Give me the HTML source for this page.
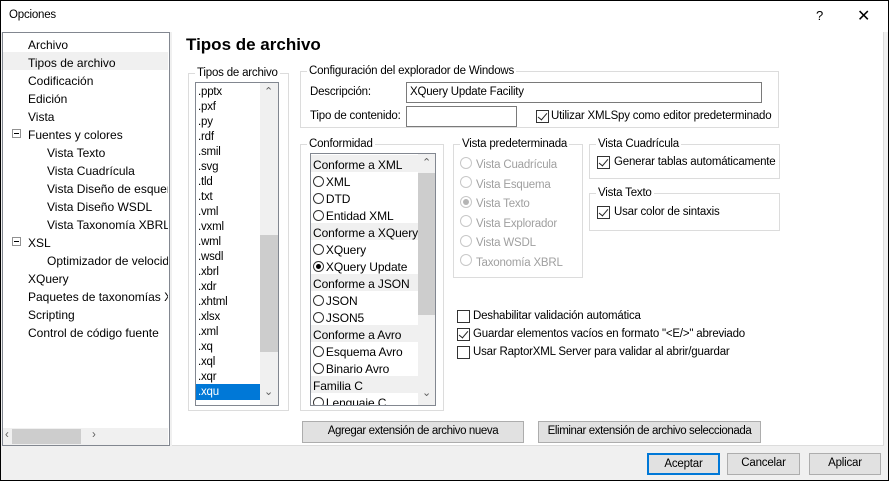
<!DOCTYPE html>
<html><head><meta charset="utf-8"><style>
*{margin:0;padding:0;box-sizing:border-box}
body{width:889px;height:481px;overflow:hidden;background:#f0f0f0;font-family:"Liberation Sans",sans-serif;font-size:11.5px;letter-spacing:-0.2px;color:#000;position:relative}
.a{position:absolute;white-space:nowrap}
.win{position:absolute;left:0;top:0;width:889px;height:481px;border:1px solid #000}
.gb{position:absolute;border:1px solid #dcdcdc}
.lg{position:absolute;top:-8px;left:6px;background:#fff;padding:0 2px;line-height:14px}
.inp{position:absolute;border:1px solid #7a7a7a;background:#fff}
.cb{position:absolute;width:13px;height:13px;border:1px solid #333;background:#fff}
.cb.c::after{content:"";position:absolute;left:3px;top:0px;width:4px;height:8px;border:solid #222;border-width:0 1.3px 1.3px 0;transform:rotate(40deg)}
.rd{position:absolute;width:12px;height:12px;border:1px solid #333;border-radius:50%;background:#fff}
.rd.g{border-color:#c8c8c8}
.btn{position:absolute;border:1px solid #adadad;background:#e1e1e1;text-align:center;line-height:19px;white-space:nowrap}
.sb{position:absolute;background:#f0f0f0}
.t{font-size:12px;letter-spacing:0}
</style></head><body>
<div class="win"></div>
<div class="a" style="width:887px;height:31px;background:#fff;left:1px;top:1px"></div>
<div class="a" style="left:9px;top:9px">Opciones</div>
<div class="a" style="left:816px;top:8px;font-size:13px">?</div>
<div class="a" style="left:857px;top:6px;font-size:16px">✕</div>

<!-- tree -->
<div class="a" style="left:2px;top:32px;width:168px;height:414px;background:#fff;border:1px solid #828790"></div>
<div class="a" style="left:3px;top:52px;width:165px;height:18px;background:#f0f0f0"></div>
<div class="a t" style="left:28px;top:36px;line-height:18px">Archivo<br>Tipos de archivo<br>Codificación<br>Edición<br>Vista<br>Fuentes y colores</div>
<div class="a t" style="left:47px;top:144px;line-height:18px;width:121px;overflow:hidden">Vista Texto<br>Vista Cuadrícula<br>Vista Diseño de esquema<br>Vista Diseño WSDL<br>Vista Taxonomía XBRL</div>
<div class="a t" style="left:28px;top:234px;line-height:18px">XSL</div>
<div class="a t" style="left:47px;top:252px;line-height:18px;width:121px;overflow:hidden">Optimizador de velocidad</div>
<div class="a t" style="left:28px;top:270px;line-height:18px;width:140px;overflow:hidden">XQuery<br>Paquetes de taxonomías XBRL<br>Scripting<br>Control de código fuente</div>
<div class="a" style="left:12px;top:129px;width:9px;height:9px;border:1px solid #919191;background:#fff"><div style="position:absolute;left:1px;top:3px;width:5px;height:1px;background:#000"></div></div>
<div class="a" style="left:12px;top:237px;width:9px;height:9px;border:1px solid #919191;background:#fff"><div style="position:absolute;left:1px;top:3px;width:5px;height:1px;background:#000"></div></div>
<div class="sb" style="left:3px;top:428px;width:165px;height:17px"></div>
<div class="a" style="left:12px;top:429px;width:69px;height:15px;background:#cdcdcd"></div>
<div class="a" style="left:5px;top:429px;color:#606060">‹</div>
<div class="a" style="left:92px;top:429px;color:#606060">›</div>

<!-- right panel -->
<div class="a" style="left:172px;top:32px;width:712px;height:414px;background:#fff;border-right:1px solid #dcdcdc;border-bottom:1px solid #dcdcdc"></div>
<div class="a" style="left:186px;top:35px;font-size:17px;font-weight:bold;letter-spacing:0">Tipos de archivo</div>

<div class="gb" style="left:188px;top:73px;width:101px;height:338px"><span class="lg">Tipos de archivo</span></div>
<div class="a" style="left:195px;top:82px;width:84px;height:324px;border:1px solid #828790;background:#fff;overflow:hidden">
<div class="a" style="left:0;top:301px;width:64px;height:16px;background:#0078d7"></div>
<div class="a" style="left:2px;top:2px;line-height:15px">.pptx<br>.pxf<br>.py<br>.rdf<br>.smil<br>.svg<br>.tld<br>.txt<br>.vml<br>.vxml<br>.wml<br>.wsdl<br>.xbrl<br>.xdr<br>.xhtml<br>.xlsx<br>.xml<br>.xq<br>.xql<br>.xqr<br><span style="color:#fff">.xqu</span></div>
<div class="sb" style="left:64px;top:0;width:18px;height:322px"></div>
<div class="a" style="left:64px;top:152px;width:18px;height:117px;background:#cdcdcd"></div>
<div class="a" style="left:68px;top:2px;color:#606060;font-size:11px">⌃</div>
<div class="a" style="left:68px;top:302px;color:#606060;font-size:11px">⌄</div>
</div>

<div class="gb" style="left:300px;top:71px;width:479px;height:57px"><span class="lg">Configuración del explorador de Windows</span></div>
<div class="a" style="left:310px;top:86px">Descripción:</div>
<div class="inp" style="left:406px;top:82px;width:356px;height:21px"><span class="a" style="left:3px;top:3px">XQuery Update Facility</span></div>
<div class="a" style="left:310px;top:110px">Tipo de contenido:</div>
<div class="inp" style="left:406px;top:106px;width:111px;height:21px"></div>
<div class="cb c" style="left:536px;top:110px"></div>
<div class="a" style="left:551px;top:110px">Utilizar XMLSpy como editor predeterminado</div>

<div class="gb" style="left:300px;top:144px;width:144px;height:267px"><span class="lg">Conformidad</span></div>
<div class="a" style="left:310px;top:153px;width:126px;height:253px;border:1px solid #828790;background:#fff;overflow:hidden">
<div class="a" style="left:0;top:1px;width:107px;height:17px;background:#f0f0f0"></div>
<div class="a" style="left:0;top:69px;width:107px;height:17px;background:#f0f0f0"></div>
<div class="a" style="left:0;top:120px;width:107px;height:17px;background:#f0f0f0"></div>
<div class="a" style="left:0;top:171px;width:107px;height:17px;background:#f0f0f0"></div>
<div class="a" style="left:0;top:222px;width:107px;height:17px;background:#f0f0f0"></div>
<div class="a" style="left:2px;top:3px;line-height:17px;font-size:12px;letter-spacing:-0.1px">Conforme a XML<br>&nbsp;&nbsp;&nbsp;&nbsp;XML<br>&nbsp;&nbsp;&nbsp;&nbsp;DTD<br>&nbsp;&nbsp;&nbsp;&nbsp;Entidad XML<br>Conforme a XQuery<br>&nbsp;&nbsp;&nbsp;&nbsp;XQuery<br>&nbsp;&nbsp;&nbsp;&nbsp;XQuery Update<br>Conforme a JSON<br>&nbsp;&nbsp;&nbsp;&nbsp;JSON<br>&nbsp;&nbsp;&nbsp;&nbsp;JSON5<br>Conforme a Avro<br>&nbsp;&nbsp;&nbsp;&nbsp;Esquema Avro<br>&nbsp;&nbsp;&nbsp;&nbsp;Binario Avro<br>Familia C<br>&nbsp;&nbsp;&nbsp;&nbsp;Lenguaje C</div>
<div class="rd" style="left:2px;top:22px;width:11px;height:11px"></div>
<div class="rd" style="left:2px;top:39px;width:11px;height:11px"></div>
<div class="rd" style="left:2px;top:56px;width:11px;height:11px"></div>
<div class="rd" style="left:2px;top:90px;width:11px;height:11px"></div>
<div class="rd" style="left:2px;top:107px;width:11px;height:11px"><div style="position:absolute;left:2px;top:2px;width:5px;height:5px;border-radius:50%;background:#000"></div></div>
<div class="rd" style="left:2px;top:141px;width:11px;height:11px"></div>
<div class="rd" style="left:2px;top:158px;width:11px;height:11px"></div>
<div class="rd" style="left:2px;top:192px;width:11px;height:11px"></div>
<div class="rd" style="left:2px;top:209px;width:11px;height:11px"></div>
<div class="rd" style="left:2px;top:243px;width:11px;height:11px"></div>
<div class="sb" style="left:107px;top:0;width:17px;height:251px"></div>
<div class="a" style="left:107px;top:19px;width:17px;height:142px;background:#cdcdcd"></div>
<div class="a" style="left:111px;top:2px;color:#606060;font-size:11px">⌃</div>
<div class="a" style="left:111px;top:232px;color:#606060;font-size:11px">⌄</div>
</div>

<div class="gb" style="left:453px;top:144px;width:130px;height:134px"><span class="lg">Vista predeterminada</span></div>
<div class="a" style="left:476px;top:156px;line-height:19.5px;color:#a0a0a0">Vista Cuadrícula<br>Vista Esquema<br>Vista Texto<br>Vista Explorador<br>Vista WSDL<br>Taxonomía XBRL</div>
<div class="rd g" style="left:460px;top:157px"></div>
<div class="rd g" style="left:460px;top:176px"></div>
<div class="rd g" style="left:460px;top:196px"><div style="position:absolute;left:2px;top:2px;width:6px;height:6px;border-radius:50%;background:#b5b5b5"></div></div>
<div class="rd g" style="left:460px;top:215px"></div>
<div class="rd g" style="left:460px;top:235px"></div>
<div class="rd g" style="left:460px;top:254px"></div>

<div class="gb" style="left:589px;top:144px;width:191px;height:35px"><span class="lg">Vista Cuadrícula</span></div>
<div class="cb c" style="left:597px;top:156px"></div>
<div class="a" style="left:614px;top:156px">Generar tablas automáticamente</div>
<div class="gb" style="left:589px;top:193px;width:191px;height:38px"><span class="lg">Vista Texto</span></div>
<div class="cb c" style="left:597px;top:206px"></div>
<div class="a" style="left:614px;top:206px">Usar color de sintaxis</div>

<div class="cb" style="left:457px;top:310px"></div>
<div class="a" style="left:473px;top:310px">Deshabilitar validación automática</div>
<div class="cb c" style="left:457px;top:328px"></div>
<div class="a" style="left:473px;top:328px">Guardar elementos vacíos en formato "&lt;E/&gt;" abreviado</div>
<div class="cb" style="left:457px;top:346px"></div>
<div class="a" style="left:473px;top:346px">Usar RaptorXML Server para validar al abrir/guardar</div>

<div class="btn" style="left:302px;top:421px;width:222px;height:22px;letter-spacing:-0.4px">Agregar extensión de archivo nueva</div>
<div class="btn" style="left:538px;top:421px;width:223px;height:22px;letter-spacing:-0.4px">Eliminar extensión de archivo seleccionada</div>

<div class="btn" style="left:647px;top:453px;width:73px;height:22px;border:2px solid #0078d7;line-height:18px">Aceptar</div>
<div class="btn" style="left:727px;top:453px;width:73px;height:22px">Cancelar</div>
<div class="btn" style="left:809px;top:453px;width:72px;height:22px">Aplicar</div>
</body></html>
